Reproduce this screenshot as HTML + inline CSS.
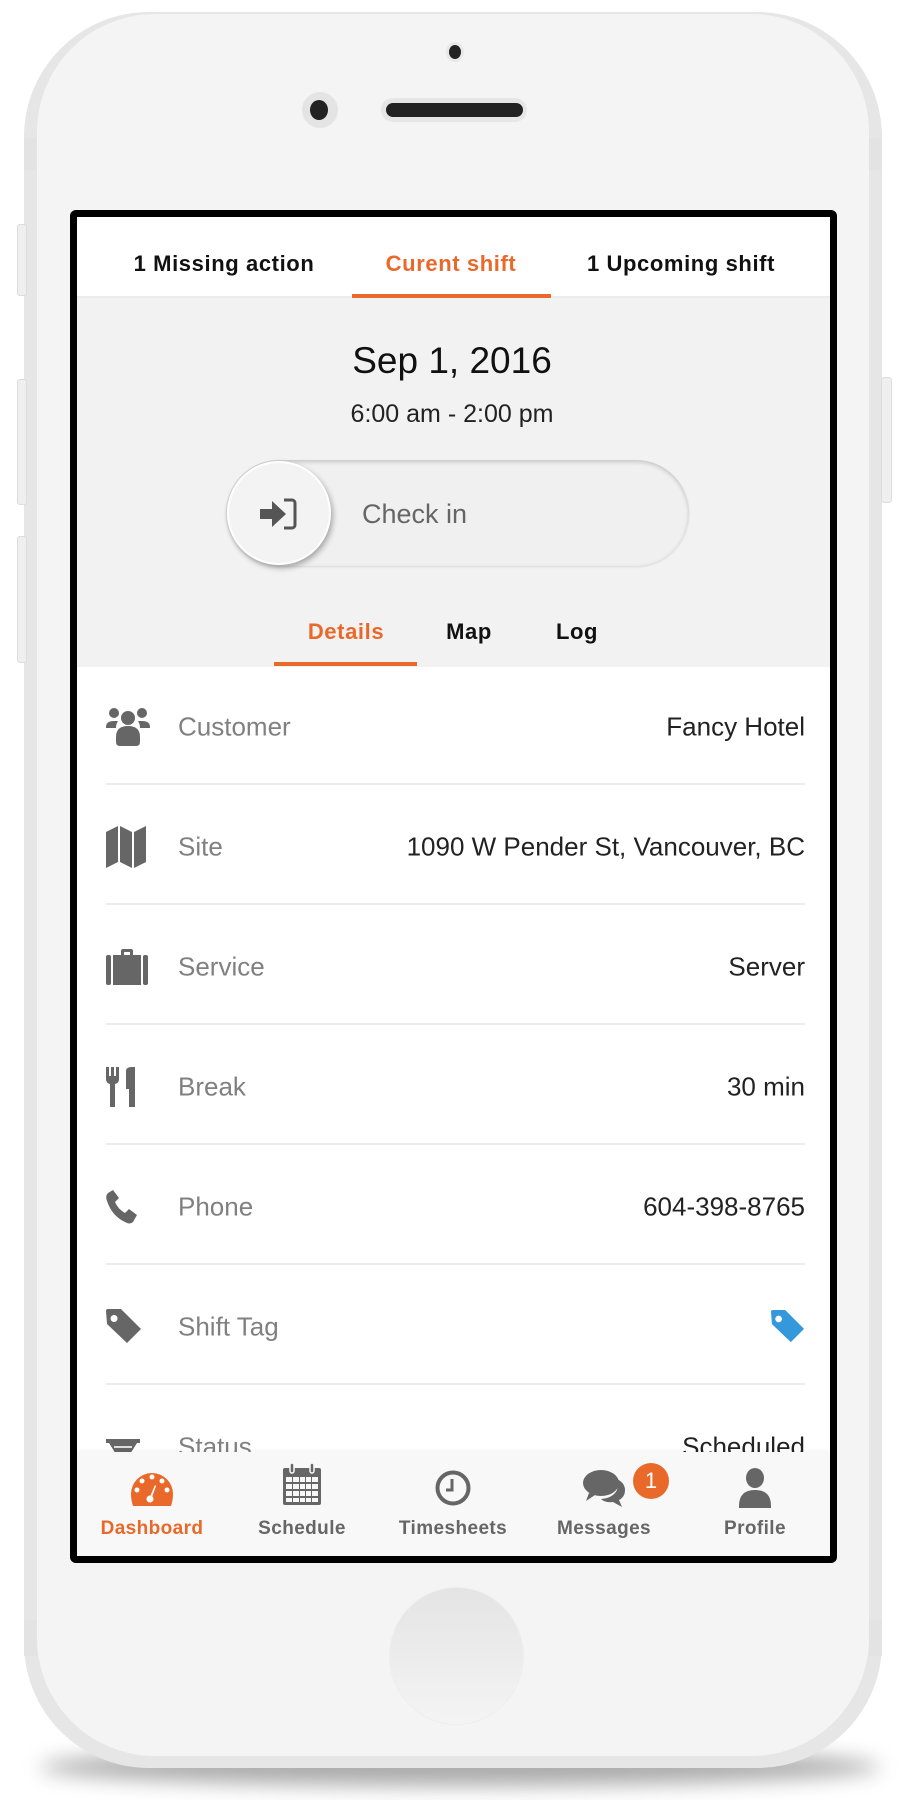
<!DOCTYPE html>
<html><head><meta charset="utf-8"><style>
*{margin:0;padding:0;box-sizing:border-box}
body{width:920px;height:1800px;background:#fff;position:relative;overflow:hidden;font-family:"Liberation Sans",sans-serif}
.abs{position:absolute}
.shadow{left:40px;top:1748px;width:840px;height:38px;border-radius:50%;background:#888;filter:blur(10px);opacity:.7}
.body{left:24px;top:12px;width:858px;height:1756px;border-radius:125px;background:#e6e6e6}
.face{left:37px;top:14px;width:832px;height:1742px;border-radius:118px;background:#f4f4f4}
.band{background:#e3e3e3}
.btn{background:#efefef;border:1px solid #ddd;border-radius:3px}
.screen{left:70px;top:210px;width:767px;height:1353px;background:#000;border-radius:6px}
.inner{left:77px;top:217px;width:753px;height:1339px;background:#fff;overflow:hidden}
.tab{position:absolute;top:264px;transform:translate(-50%,-50%);font-size:22px;letter-spacing:.6px;font-weight:bold;color:#111;white-space:nowrap}
.row{position:absolute;left:106px;width:699px;height:40px}
.lab{position:absolute;left:72px;top:50%;transform:translateY(-50%);font-size:26px;color:#808080}
.val{position:absolute;right:0;top:50%;transform:translateY(-50%);font-size:26px;color:#222;white-space:nowrap}
.div{position:absolute;left:106px;width:699px;height:2px;background:#ececec}
.ic{position:absolute;left:0;top:50%;transform:translateY(-50%)}
.nl{position:absolute;top:1529px;transform:translate(-50%,-50%);font-size:19px;letter-spacing:.4px;font-weight:bold;color:#666}
.ni{position:absolute;top:1488px;transform:translate(-50%,-50%)}
</style></head><body>
<div class="abs shadow"></div>
<div class="abs body"></div>
<div class="abs btn" style="left:17px;top:224px;width:10px;height:72px"></div>
<div class="abs btn" style="left:17px;top:379px;width:10px;height:126px"></div>
<div class="abs btn" style="left:17px;top:536px;width:10px;height:127px"></div>
<div class="abs btn" style="left:881px;top:377px;width:11px;height:126px"></div>
<div class="abs face"></div>
<div class="abs band" style="left:24px;top:138px;width:13px;height:32px"></div>
<div class="abs band" style="left:869px;top:138px;width:13px;height:32px"></div>
<div class="abs band" style="left:24px;top:1620px;width:13px;height:36px"></div>
<div class="abs band" style="left:869px;top:1620px;width:13px;height:36px"></div>
<div class="abs" style="left:446px;top:42px;width:18px;height:20px;border-radius:50%;background:#e8e8e8"></div>
<div class="abs" style="left:449px;top:45px;width:12px;height:14px;border-radius:50%;background:#222"></div>
<div class="abs" style="left:302px;top:92px;width:36px;height:36px;border-radius:50%;background:#e4e4e4"></div>
<div class="abs" style="left:310px;top:100px;width:18px;height:20px;border-radius:50%;background:#222"></div>
<div class="abs" style="left:381px;top:98px;width:146px;height:24px;border-radius:12px;background:#e6e6e6"></div>
<div class="abs" style="left:386px;top:103px;width:137px;height:14px;border-radius:7px;background:#222"></div>
<div class="abs" style="left:389px;top:1587px;width:135px;height:138px;border-radius:50%;background:linear-gradient(#e4e4e4,#f4f4f4);border:1px solid #eee"></div>

<div class="abs screen"></div>
<div class="abs inner"></div>
<div class="abs" style="left:77px;top:297px;width:753px;height:370px;background:#f2f2f2"></div>
<div class="abs" style="left:77px;top:296px;width:753px;height:2px;background:#ececec"></div>
<div class="tab" style="left:224px">1 Missing action</div>
<div class="tab" style="left:451px;color:#e8692a">Curent shift</div>
<div class="tab" style="left:681px">1 Upcoming shift</div>
<div class="abs" style="left:352px;top:294px;width:199px;height:4px;background:#e8692a"></div>
<div class="abs" style="left:-8px;width:920px;top:340px;text-align:center;font-size:37px;color:#111">Sep 1, 2016</div>
<div class="abs" style="left:-8px;width:920px;top:400px;text-align:center;font-size:25px;color:#222">6:00 am - 2:00 pm</div>
<div class="abs" style="left:226px;top:460px;width:463px;height:106px;border-radius:53px;background:#f0f0f0;box-shadow:0 2px 4px rgba(0,0,0,.18) inset, 0 1px 2px rgba(0,0,0,.1)"></div>
<div class="abs" style="left:227px;top:461px;width:104px;height:104px;border-radius:50%;background:#f3f3f3;box-shadow:2px 3px 6px rgba(0,0,0,.3);border:2px solid #fff"></div>
<svg class="abs" style="left:258px;top:494px" width="40" height="40" viewBox="0 0 40 40"><path d="M2 15h12V7l14 13-14 13v-8H2z" fill="#555"/><path d="M26 6h8a3 3 0 0 1 3 3v22a3 3 0 0 1-3 3h-8" fill="none" stroke="#555" stroke-width="3"/></svg>
<div class="abs" style="left:362px;top:499px;font-size:27px;color:#666">Check in</div>
<div class="tab" style="left:346px;top:632px;color:#e8692a">Details</div>
<div class="tab" style="left:469px;top:632px">Map</div>
<div class="tab" style="left:577px;top:632px">Log</div>
<div class="abs" style="left:274px;top:662px;width:143px;height:4px;background:#e8692a"></div>

<div class="row" style="top:707px"><svg class="ic" width="44" height="40" viewBox="0 0 44 40"><circle cx="22" cy="11" r="7" fill="#666"/><circle cx="8" cy="6" r="5" fill="#666"/><circle cx="36" cy="6" r="5" fill="#666"/><path d="M0 20q0-6 8-6h4q-2 3-2 7H0zM44 20q0-6-8-6h-4q2 3 2 7h10z" fill="#666"/><path d="M10 30q0-11 12-11t12 11v5q0 4-4 4H14q-4 0-4-4z" fill="#666"/></svg><span class="lab">Customer</span><span class="val">Fancy Hotel</span></div>
<div class="div" style="top:783px"></div>
<div class="row" style="top:827px"><svg class="ic" width="42" height="42" viewBox="0 0 42 42"><path d="M0 6l12-6v36L0 42zM14 0l12 6v36l-12-6zM28 6l12-6v36l-12 6z" fill="#666"/></svg><span class="lab">Site</span><span class="val">1090 W Pender St, Vancouver, BC</span></div>
<div class="div" style="top:903px"></div>
<div class="row" style="top:947px"><svg class="ic" width="42" height="36" viewBox="0 0 42 36"><path d="M15 6V2q0-2 2-2h8q2 0 2 2v4h-3V3h-6v3z" fill="#666"/><rect x="0" y="6" width="5" height="30" rx="2" fill="#666"/><rect x="7" y="6" width="28" height="30" fill="#666"/><rect x="37" y="6" width="5" height="30" rx="2" fill="#666"/></svg><span class="lab">Service</span><span class="val">Server</span></div>
<div class="div" style="top:1023px"></div>
<div class="row" style="top:1067px"><svg class="ic" width="32" height="40" viewBox="0 0 32 40"><path d="M0 0h3v9h2V0h3v9h2V0h3v12q0 4-4 5v23H4V17q-4-1-4-5z" fill="#666"/><path d="M20 4q0-4 6-4h3v40h-6V22h-3z" fill="#666"/></svg><span class="lab">Break</span><span class="val">30 min</span></div>
<div class="div" style="top:1143px"></div>
<div class="row" style="top:1187px"><svg class="ic" width="34" height="34" viewBox="0 0 34 34"><path d="M7 0l6 8-4 4q3 7 10 11l4-4 8 6-4 7q-3 3-8 0Q6 26 1 11-1 6 2 3z" fill="#666"/></svg><span class="lab">Phone</span><span class="val">604-398-8765</span></div>
<div class="div" style="top:1263px"></div>
<div class="row" style="top:1307px"><svg class="ic" width="36" height="36" viewBox="0 0 36 36"><path d="M0 2q0-2 2-2h13l20 20-14 14L1 15zM8 6a3.5 3.5 0 1 0 .1 0z" fill="#666" fill-rule="evenodd"/></svg><span class="lab">Shift Tag</span><svg class="val" width="34" height="34" viewBox="0 0 36 36"><path d="M0 2q0-2 2-2h13l20 20-14 14L1 15zM8 6a3.5 3.5 0 1 0 .1 0z" fill="#3498db" fill-rule="evenodd"/></svg></div>
<div class="div" style="top:1383px"></div>
<div class="row" style="top:1427px"><svg class="ic" width="34" height="40" viewBox="0 0 34 40" style="top:12px;transform:none"><rect x="0" y="0" width="34" height="4" fill="#666"/><path d="M3 4h28l-10 16 10 16H3l10-16z" fill="#666"/><path d="M8 8h18" stroke="#ddd" stroke-width="2"/></svg><span class="lab">Status</span><span class="val">Scheduled</span></div>

<div class="abs" style="left:77px;top:1452px;width:753px;height:104px;background:#f8f8f8;box-shadow:0 -2px 4px rgba(0,0,0,.04)"></div>
<svg class="ni" style="left:152px" width="42" height="36" viewBox="0 0 42 36"><path d="M2 36Q0 30 0 24a21 21 0 0 1 42 0q0 6-2 12z" fill="#e8692a"/><g fill="#fff"><circle cx="21" cy="7" r="2.5"/><circle cx="11" cy="11" r="2.5"/><circle cx="31" cy="11" r="2.5"/><circle cx="6" cy="20" r="2.5"/><circle cx="36" cy="20" r="2.5"/><circle cx="19" cy="29" r="3.5"/><path d="M18 29l6-14 1 1-5 14z"/></g></svg>
<div class="nl" style="left:152px;color:#e8692a">Dashboard</div>
<svg class="ni" style="left:302px;top:1484px" width="38" height="42" viewBox="0 0 38 42"><rect x="0" y="5" width="38" height="37" rx="2" fill="#666"/><rect x="7" y="0" width="4" height="10" rx="2" fill="#666" stroke="#f8f8f8" stroke-width="1.5"/><rect x="27" y="0" width="4" height="10" rx="2" fill="#666" stroke="#f8f8f8" stroke-width="1.5"/><g fill="#f8f8f8"><rect x="3" y="14" width="6" height="5"/><rect x="10" y="14" width="6" height="5"/><rect x="17" y="14" width="5" height="5"/><rect x="23" y="14" width="5" height="5"/><rect x="29" y="14" width="6" height="5"/><rect x="3" y="21" width="6" height="5"/><rect x="10" y="21" width="6" height="5"/><rect x="17" y="21" width="5" height="5"/><rect x="23" y="21" width="5" height="5"/><rect x="29" y="21" width="6" height="5"/><rect x="3" y="28" width="6" height="5"/><rect x="10" y="28" width="6" height="5"/><rect x="17" y="28" width="5" height="5"/><rect x="23" y="28" width="5" height="5"/><rect x="29" y="28" width="6" height="5"/><rect x="3" y="35" width="6" height="4"/><rect x="10" y="35" width="6" height="4"/><rect x="17" y="35" width="5" height="4"/><rect x="23" y="35" width="5" height="4"/><rect x="29" y="35" width="6" height="4"/></g></svg>
<div class="nl" style="left:302px">Schedule</div>
<svg class="ni" style="left:453px" width="36" height="36" viewBox="0 0 36 36"><circle cx="18" cy="18" r="15.5" fill="none" stroke="#666" stroke-width="4"/><path d="M17 9v11h-6" fill="none" stroke="#666" stroke-width="3"/></svg>
<div class="nl" style="left:453px">Timesheets</div>
<svg class="ni" style="left:604px" width="42" height="38" viewBox="0 0 42 38"><ellipse cx="18" cy="14" rx="18" ry="13" fill="#666"/><path d="M6 24l-3 8 9-6z" fill="#666"/><path d="M34 10q8 4 8 11t-6 10l3 7-9-5q-8 1-12-3 12-1 16-9 1-5 0-11z" fill="#666"/></svg>
<div class="abs" style="left:633px;top:1463px;width:36px;height:36px;border-radius:50%;background:#e8692a;color:#fff;font-size:22px;text-align:center;line-height:36px">1</div>
<div class="nl" style="left:604px">Messages</div>
<svg class="ni" style="left:755px" width="32" height="40" viewBox="0 0 32 40"><ellipse cx="16" cy="10" rx="9" ry="10" fill="#666"/><path d="M0 38q0-16 16-16t16 16v2H0z" fill="#666"/></svg>
<div class="nl" style="left:755px">Profile</div>
</body></html>
